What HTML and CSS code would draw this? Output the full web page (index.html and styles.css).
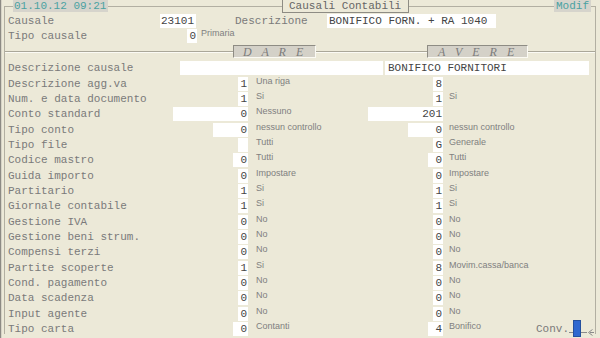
FILE: index.html
```html
<!DOCTYPE html>
<html lang="it">
  <head>
    <meta charset="UTF-8" />
    <title>Causali Contabili</title>
    <link rel="stylesheet" href="styles.css">
  </head>
  <body>
    <div class="window">
      <div class="frame">
        <div class="titlebar">
          <span class="stamp date">01.10.12 09:21</span>
          <span class="title">Causali Contabili</span>
          <span class="stamp mode">Modif</span>
        </div>

        <div class="headRow">
          <span class="lbl headLbl">Causale</span>
          <span class="box codeBox">23101</span>
          <span class="lbl descLbl">Descrizione</span>
          <span class="box headText">BONIFICO FORN. + RA 1040</span>
        </div>
        <div class="headRow">
          <span class="lbl headLbl">Tipo causale</span>
          <span class="box w1 typeBox">0</span>
          <span class="note typeNote">Primaria</span>
        </div>

        <div class="split">
          <span class="rule ruleLeft"></span>
          <span class="side dare">D A R E</span>
          <span class="rule ruleMid"></span>
          <span class="side avere">A V E R E</span>
          <span class="rule ruleRight"></span>
        </div>

        <div class="row">
          <span class="lbl">Descrizione causale</span>
          <div class="texts">
            <span class="box textDare"></span>
            <span class="box textAvere">BONIFICO FORNITORI</span>
          </div>
        </div>
        <div class="row">
          <span class="lbl">Descrizione agg.va</span>
          <span class="box w1 dv">1</span><span class="note dn">Una riga</span>
          <span class="box w1 av">8</span>
        </div>
        <div class="row">
          <span class="lbl">Num. e data documento</span>
          <span class="box w1 dv">1</span><span class="note dn">Si</span>
          <span class="box w1 av">1</span><span class="note an">Si</span>
        </div>
        <div class="row">
          <span class="lbl">Conto standard</span>
          <span class="box w11 dv">0</span><span class="note dn">Nessuno</span>
          <span class="box w11 av">201</span>
        </div>
        <div class="row">
          <span class="lbl">Tipo conto</span>
          <span class="box w5 dv">0</span><span class="note dn">nessun controllo</span>
          <span class="box w5 av">0</span><span class="note an">nessun controllo</span>
        </div>
        <div class="row">
          <span class="lbl">Tipo file</span>
          <span class="box w1 dv"></span><span class="note dn">Tutti</span>
          <span class="box w1 av">G</span><span class="note an">Generale</span>
        </div>
        <div class="row">
          <span class="lbl">Codice mastro</span>
          <span class="box w2 dv">0</span><span class="note dn">Tutti</span>
          <span class="box w2 av">0</span><span class="note an">Tutti</span>
        </div>
        <div class="row">
          <span class="lbl">Guida importo</span>
          <span class="box w1 dv">0</span><span class="note dn">Impostare</span>
          <span class="box w1 av">0</span><span class="note an">Impostare</span>
        </div>
        <div class="row">
          <span class="lbl">Partitario</span>
          <span class="box w1 dv">1</span><span class="note dn">Si</span>
          <span class="box w1 av">1</span><span class="note an">Si</span>
        </div>
        <div class="row">
          <span class="lbl">Giornale contabile</span>
          <span class="box w1 dv">1</span><span class="note dn">Si</span>
          <span class="box w1 av">1</span><span class="note an">Si</span>
        </div>
        <div class="row">
          <span class="lbl">Gestione IVA</span>
          <span class="box w1 dv">0</span><span class="note dn">No</span>
          <span class="box w1 av">0</span><span class="note an">No</span>
        </div>
        <div class="row">
          <span class="lbl">Gestione beni strum.</span>
          <span class="box w1 dv">0</span><span class="note dn">No</span>
          <span class="box w1 av">0</span><span class="note an">No</span>
        </div>
        <div class="row">
          <span class="lbl">Compensi terzi</span>
          <span class="box w1 dv">0</span><span class="note dn">No</span>
          <span class="box w1 av">0</span><span class="note an">No</span>
        </div>
        <div class="row">
          <span class="lbl">Partite scoperte</span>
          <span class="box w1 dv">1</span><span class="note dn">Si</span>
          <span class="box w1 av">8</span><span class="note an">Movim.cassa/banca</span>
        </div>
        <div class="row">
          <span class="lbl">Cond. pagamento</span>
          <span class="box w1 dv">0</span><span class="note dn">No</span>
          <span class="box w1 av">0</span><span class="note an">No</span>
        </div>
        <div class="row">
          <span class="lbl">Data scadenza</span>
          <span class="box w1 dv">0</span><span class="note dn">No</span>
          <span class="box w1 av">0</span><span class="note an">No</span>
        </div>
        <div class="row">
          <span class="lbl">Input agente</span>
          <span class="box w1 dv">0</span><span class="note dn">No</span>
          <span class="box w1 av">0</span><span class="note an">No</span>
        </div>
        <div class="row">
          <span class="lbl">Tipo carta</span>
          <span class="box w2 dv">0</span><span class="note dn">Contanti</span>
          <span class="box w2 av">4</span>
          <div class="an lastCell">
            <span class="note">Bonifico</span>
            <span class="lbl conv">Conv.</span>
            <svg class="link" width="26" height="17" viewBox="0 0 26 17">
              <path d="M0 12.5H4M12 12.5H18M25 12.5H21" stroke="#8a8a8a" fill="none" />
              <path d="M23.5 9.5L19.5 12.5L23.5 15.5" stroke="#8a8a8a" fill="none" />
              <rect x="4.5" y="0.5" width="7" height="16" fill="#2f68d0" stroke="#24509e" />
            </svg>
          </div>
        </div>
      </div>
    </div>
  </body>
</html>
```

FILE: styles.css
```css
body {
  margin: 0;
  background-color: #ece9d8;
  width: 600px;
  height: 338px;
  overflow: hidden;
  font-family: "Liberation Mono", "Courier New", monospace;
  font-size: 11px;
}
.window {
  height: 338px;
  border-left: 1px solid #8c8a84;
  box-shadow: inset 1px 0 #d6d3c6;
  padding-top: 6px;
  box-sizing: border-box;
}
.frame {
  margin-left: 3px;
  margin-right: 4px;
  height: 327px;
  border: 1px solid #b2afa2;
  border-bottom: none;
}
.titlebar {
  display: flex;
  align-items: flex-start;
  height: 13px;
  margin-top: -7px;
}
.stamp {
  height: 12px;
  line-height: 13px;
  background-color: #d6d4cc;
  color: #4aa2a2;
  box-sizing: border-box;
}
.date {
  margin-left: 8px;
  width: 95px;
  padding-left: 1px;
}
.mode {
  margin-left: auto;
  margin-right: 4px;
  width: 37px;
  padding-left: 2px;
}
.title {
  margin-left: 174px;
  width: 127px;
  height: 13px;
  line-height: 13px;
  box-sizing: border-box;
  padding-left: 6px;
  color: #666;
  background-color: #ece9d8;
  border: 1px solid #8e8c84;
  border-top: none;
}
.lbl {
  color: #7a7a7a;
  white-space: nowrap;
  padding-top: 2px;
  line-height: 13.35px;
}
.box {
  display: block;
  height: 14px;
  margin-top: 1px;
  padding-top: 1px;
  line-height: 13px;
  background-color: #fff;
  color: #444;
  text-align: right;
  padding-right: 1px;
  box-sizing: border-box;
  white-space: nowrap;
  overflow: hidden;
}
.note {
  font-family: "Liberation Sans", Arial, sans-serif;
  font-size: 9px;
  line-height: 11px;
  color: #808080;
  white-space: nowrap;
}
.headRow {
  display: flex;
  align-items: flex-start;
  height: 15.35px;
  padding-left: 3px;
}
.headLbl {
  width: 152px;
}
.codeBox {
  width: 36px;
  padding-right: 2px;
}
.descLbl {
  margin-left: 39px;
  width: 92px;
}
.headText {
  width: 169px;
  text-align: left;
  padding-left: 2px;
}
.typeBox {
  margin-left: 27px;
  width: 9px;
}
.typeNote {
  margin-left: 4px;
}
.split {
  display: flex;
  align-items: center;
  height: 16.6px;
}
.rule {
  height: 0;
  border-top: 1px solid #aaa799;
  border-bottom: 1px solid #fbfaf4;
}
.ruleLeft {
  width: 228px;
}
.ruleMid {
  width: 111px;
}
.ruleRight {
  flex: 1;
}
.side {
  height: 13px;
  line-height: 12px;
  box-sizing: border-box;
  background-color: #d4d1c8;
  border-top: 1px solid #8e8c84;
  border-left: 1px solid #8e8c84;
  border-bottom: 1px solid #fbfaf4;
  border-right: 1px solid #fbfaf4;
  color: #7c7c7c;
  font-family: "Liberation Serif", "Times New Roman", serif;
  font-size: 12px;
  font-style: italic;
  white-space: nowrap;
  word-spacing: 7px;
}
.dare {
  width: 83px;
  padding-left: 9px;
}
.avere {
  width: 101px;
  padding-left: 10px;
}
.row {
  display: grid;
  grid-template-columns: 168px 75px 119px 76px 1fr;
  height: 15.35px;
}
.row > .lbl {
  padding-left: 3px;
}
.dv {
  grid-column: 2;
  justify-self: end;
}
.dn {
  grid-column: 3;
  padding-left: 8px;
}
.av {
  grid-column: 4;
  justify-self: end;
}
.an {
  grid-column: 5;
  padding-left: 6px;
}
.w1 {
  width: 10px;
}
.w2 {
  width: 15px;
}
.w5 {
  width: 35px;
}
.w11 {
  width: 75px;
}
.texts {
  grid-column: 2 / 6;
  display: flex;
}
.textDare {
  margin-left: 7px;
  width: 203px;
}
.textAvere {
  margin-left: 2px;
  width: 204px;
  text-align: left;
  padding-left: 3px;
}
.lastCell {
  display: flex;
  align-items: flex-start;
}
.conv {
  margin-left: auto;
}
.link {
  display: block;
  margin-top: -1px;
}
```
